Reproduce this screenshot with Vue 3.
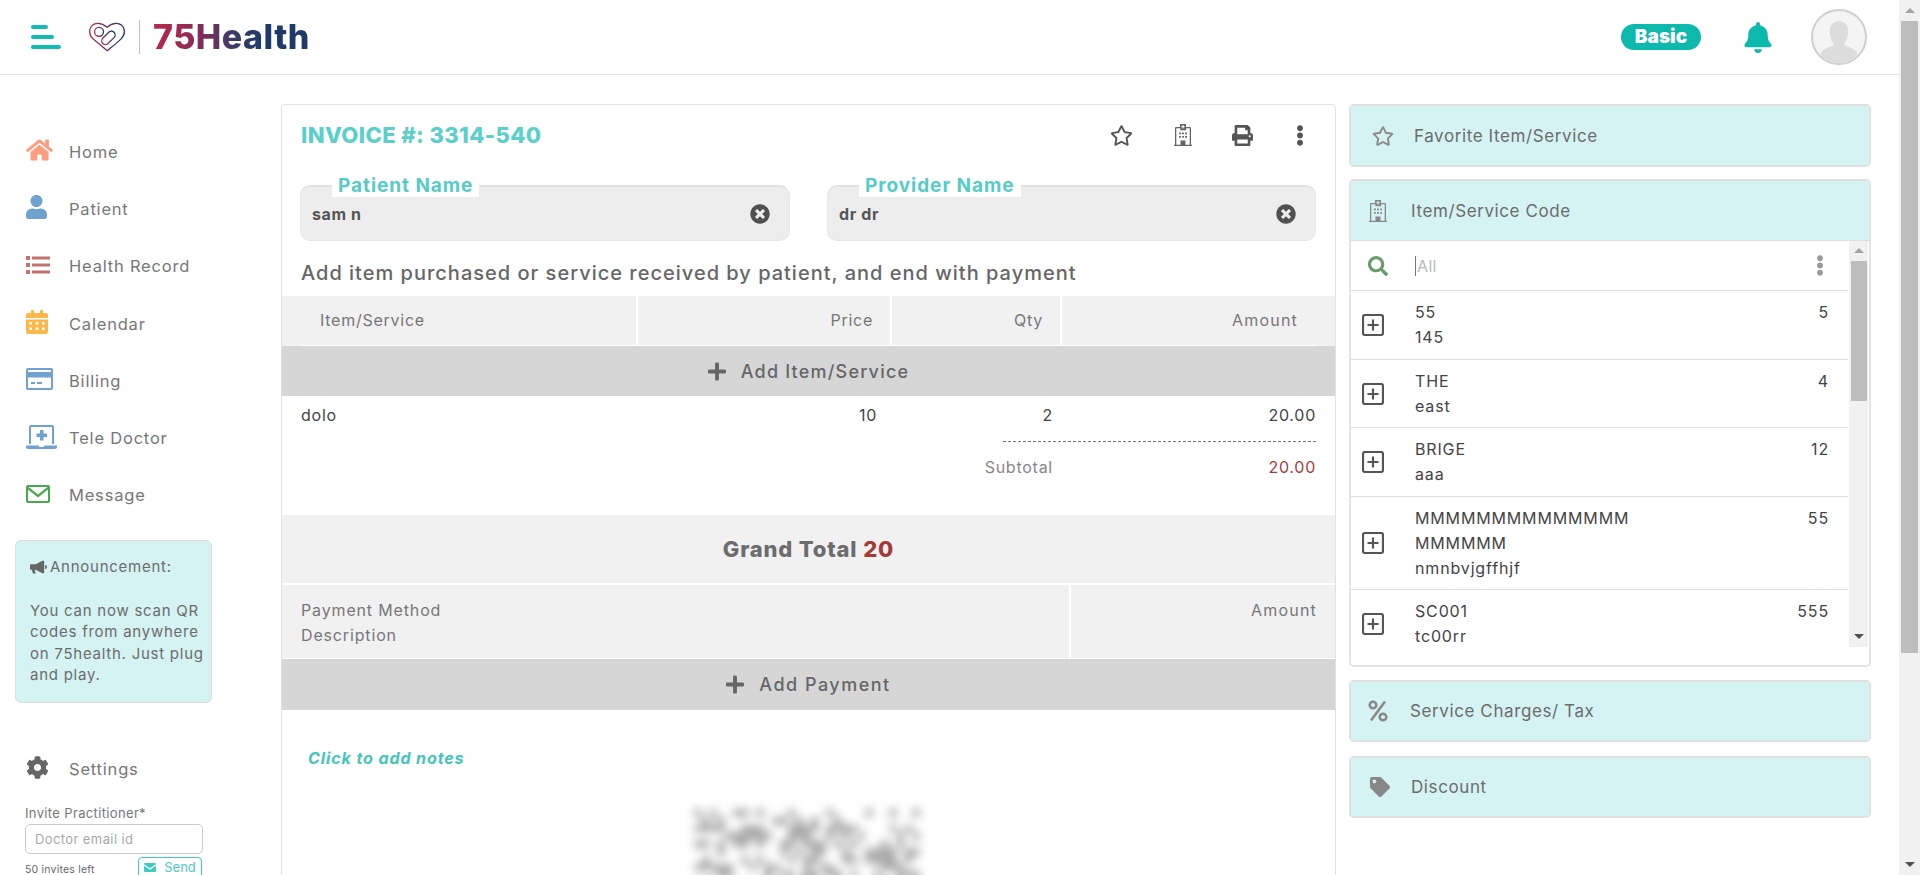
<template>
  <div class="screen">
    <div class="page">
      <header class="topbar">
        <div class="burger"><i class="b1"></i><i class="b2"></i><i class="b3"></i></div>
        <svg class="heart" viewBox="0 0 40 32" fill="none">
          <defs>
            <linearGradient id="logoGrad" x1="0" y1="0" x2="1" y2="0">
              <stop offset="0" stop-color="#b5304d" />
              <stop offset="1" stop-color="#1f3a68" />
            </linearGradient>
          </defs>
          <g stroke="url(#logoGrad)" stroke-width="1.4">
            <path d="M20 30.500 L5 18 C-1 12 1 2 10 1.500 C14 1.400 17 3 20 5.500 C23 3 26 1.400 30 1.500 C39 2 41 12 35 18 C31 22 26 26 23.500 28 C22 29.500 21 30.500 20 30.500 Z" />
            <circle cx="11.500" cy="10.500" r="4.800" />
            <rect x="13" y="13" width="17" height="8" rx="4" transform="rotate(-45 21.500 17)" />
          </g>
        </svg>
        <span class="logo-div"></span>
        <span class="logo-text">75Health</span>
        <div class="top-right">
          <span class="plan">Basic</span>
          <svg class="bell" :viewBox="icons.bell.vb"><path :d="icons.bell.d" /></svg>
          <div class="avatar">
            <svg viewBox="0 0 56 56"><path d="M28 11c7 0 10 5 10 11 0 5-2 10-4 12v3c3 2 12 3 14 10a26 26 0 0 1-40 0c2-7 11-8 14-10v-3c-2-2-4-7-4-12 0-6 3-11 10-11z" /></svg>
          </div>
        </div>
      </header>

      <div class="content">
        <aside class="sidebar">
          <nav>
            <a v-for="n in nav" :key="n.label" class="nav-item">
              <span class="nav-ico">
                <svg :viewBox="icons[n.icon].vb" :class="n.icon" :style="{ color: n.color }"><path fill-rule="evenodd" :d="icons[n.icon].d" /></svg>
              </span>
              <span>{{ n.label }}</span>
            </a>
          </nav>
          <div class="announce">
            <div class="ann-title">
              <svg viewBox="0 0 18 14"><path d="M1 4h5l7-3.500h2v13h-2L6 10H5l1 4H3L2 10H1a1 1 0 0 1-1-1V5a1 1 0 0 1 1-1zM16 5a2 2 0 0 1 0 4z" /></svg>
              Announcement:
            </div>
            <p>You can now scan QR codes from anywhere on 75health. Just plug and play.</p>
          </div>
          <a class="nav-item settings">
            <span class="nav-ico"><svg :viewBox="icons.cog.vb" class="cog"><path :d="icons.cog.d" /></svg></span>
            <span>Settings</span>
          </a>
          <div class="invite">
            <label>Invite Practitioner*</label>
            <div class="invite-input">Doctor email id</div>
            <div class="invite-foot">
              <small>50 invites left</small>
              <button class="send">
                <svg viewBox="0 0 16 12"><path d="M0 1.500A1.500 1.500 0 0 1 1.500 0h13A1.500 1.500 0 0 1 16 1.500L8 7zM0 3.500l8 5.500 8-5.500v7a1.500 1.500 0 0 1-1.500 1.500h-13A1.500 1.500 0 0 1 0 10.500z" /></svg>
                Send
              </button>
            </div>
          </div>
        </aside>

        <main class="invoice">
          <div class="inv-top">
            <h1>INVOICE #: 3314-540</h1>
            <div class="inv-tools">
              <svg :viewBox="icons.star.vb" class="t-star"><path :d="icons.star.d" /></svg>
              <svg :viewBox="icons.hospital.vb" class="t-hosp"><path fill-rule="evenodd" :d="icons.hospital.d" /></svg>
              <svg :viewBox="icons.print.vb" class="t-print"><path :d="icons.print.d" /></svg>
              <svg :viewBox="icons.dots.vb" class="t-dots"><path :d="icons.dots.d" /></svg>
            </div>
          </div>

          <div class="fields">
            <div v-for="f in fields" :key="f.label" class="field">
              <span class="field-label">{{ f.label }}</span>
              <span class="field-val">{{ f.value }}</span>
              <svg :viewBox="icons.times.vb"><path :d="icons.times.d" /></svg>
            </div>
          </div>

          <h2 class="lead">Add item purchased or service received by patient, and end with payment</h2>

          <div class="thead">
            <div class="c-item">Item/Service</div>
            <div class="c-r">Price</div>
            <div class="c-r">Qty</div>
            <div class="c-r c-last">Amount</div>
          </div>
          <div class="add-row">
            <svg :viewBox="icons.plus.vb"><path :d="icons.plus.d" /></svg>
            <span>Add Item/Service</span>
          </div>

          <div class="lines">
            <div class="line">
              <span>dolo</span><span class="r">10</span><span class="r">2</span><span class="r">20.00</span>
            </div>
            <div class="dotted"></div>
            <div class="line sub">
              <span></span><span></span><span class="r muted">Subtotal</span><span class="r red">20.00</span>
            </div>
          </div>

          <div class="grand">Grand Total <b>20</b></div>

          <div class="pay-head">
            <div class="pay-left">Payment Method<br />Description</div>
            <div class="pay-right">Amount</div>
          </div>
          <div class="add-row add-pay">
            <svg :viewBox="icons.plus.vb"><path :d="icons.plus.d" /></svg>
            <span>Add Payment</span>
          </div>

          <div class="notes">Click to add notes</div>
          <div class="qr">
            <svg viewBox="0 0 29 29" shape-rendering="crispEdges">
              <rect v-for="c in qrCells" :key="c.k" :x="c.x" :y="c.y" width="1" height="1" />
            </svg>
          </div>
        </main>

        <section class="side">
          <div class="box fav">
            <div class="box-head">
              <svg :viewBox="icons.star.vb" class="h-star"><path :d="icons.star.d" /></svg>
              <span>Favorite Item/Service</span>
            </div>
          </div>

          <div class="box code-box">
            <div class="box-head">
              <svg :viewBox="icons.hospital.vb" class="h-hosp"><path fill-rule="evenodd" :d="icons.hospital.d" /></svg>
              <span>Item/Service Code</span>
            </div>
            <div class="list-wrap">
              <div class="list">
                <div class="search">
                  <svg :viewBox="icons.search.vb" class="s-ico"><path :d="icons.search.d" /></svg>
                  <span class="caret"></span><span class="ph">All</span>
                  <svg :viewBox="icons.dots.vb" class="s-dots"><path :d="icons.dots.d" /></svg>
                </div>
                <div v-for="it in items" :key="it.sub" class="item">
                  <svg class="plus-box" viewBox="0 0 22 22" fill="none">
                    <rect x="1" y="1" width="20" height="20" rx="2" />
                    <path d="M11 5.500v11M5.500 11h11" />
                  </svg>
                  <div class="item-text">{{ it.title }}<br />{{ it.sub }}</div>
                  <div class="item-num">{{ it.num }}</div>
                </div>
              </div>
              <div class="mini-scroll">
                <i class="up"></i>
                <div class="mini-thumb"></div>
                <i class="down"></i>
              </div>
            </div>
          </div>

          <div class="box">
            <div class="box-head">
              <svg viewBox="0 0 20 24" class="h-pct" fill="none">
                <circle cx="5" cy="6" r="3.300" /><circle cx="15" cy="18" r="3.300" /><path d="M17 2.500 3 21.500" />
              </svg>
              <span>Service Charges/ Tax</span>
            </div>
          </div>
          <div class="box last">
            <div class="box-head">
              <svg :viewBox="icons.tag.vb" class="h-tag"><path :d="icons.tag.d" /></svg>
              <span>Discount</span>
            </div>
          </div>
        </section>
      </div>
    </div>

    <div class="scrollbar">
      <i class="up"></i>
      <div class="thumb"></div>
      <i class="down"></i>
    </div>
  </div>
</template>

<script setup>
const icons = {
  home: { vb: '0 0 576 512', d: 'M280.37 148.26L96 300.11V464a16 16 0 0 0 16 16l112.06-.29a16 16 0 0 0 15.92-16V368a16 16 0 0 1 16-16h64a16 16 0 0 1 16 16v95.64a16 16 0 0 0 16 16.05L464 480a16 16 0 0 0 16-16V300L295.67 148.26a12.19 12.19 0 0 0-15.3 0zM571.6 251.47L488 182.56V44.05a12 12 0 0 0-12-12h-56a12 12 0 0 0-12 12v72.61L318.47 43a48 48 0 0 0-61 0L4.34 251.47a12 12 0 0 0-1.6 16.9l25.5 31A12 12 0 0 0 45.15 301l235.22-193.74a12.19 12.19 0 0 1 15.3 0L530.9 301a12 12 0 0 0 16.9-1.6l25.5-31a12 12 0 0 0-1.7-16.93z' },
  user: { vb: '0 0 448 512', d: 'M224 256c70.7 0 128-57.3 128-128S294.7 0 224 0 96 57.3 96 128s57.3 128 128 128zm89.6 32h-16.7c-22.2 10.2-46.9 16-72.9 16s-50.6-5.8-72.9-16h-16.7C60.2 288 0 348.2 0 422.4V464c0 26.5 21.5 48 48 48h352c26.5 0 48-21.5 48-48v-41.6c0-74.2-60.2-134.4-134.4-134.4z' },
  list: { vb: '0 0 24 20', d: 'M0 1h4v4H0zM6 1.500h18v3H6zM0 8h4v4H0zM6 8.500h18v3H6zM0 15h4v4H0zM6 15.500h18v3H6z' },
  calendar: { vb: '0 0 22 24', d: 'M2 3h3V1a1 1 0 0 1 1-1h1a1 1 0 0 1 1 1v2h6V1a1 1 0 0 1 1-1h1a1 1 0 0 1 1 1v2h3a2 2 0 0 1 2 2v3H0V5a2 2 0 0 1 2-2zM0 9.500h22V22a2 2 0 0 1-2 2H2a2 2 0 0 1-2-2zM3.500 12v2.500H6V12zM9.700 12v2.500h2.600V12zM16 12v2.500h2.500V12zM3.500 17.500V20H6v-2.500zM9.700 17.500V20h2.600v-2.500zM16 17.500V20h2.500v-2.500z' },
  card: { vb: '0 0 27 22', d: 'M2 0h23a2 2 0 0 1 2 2v18a2 2 0 0 1-2 2H2a2 2 0 0 1-2-2V2a2 2 0 0 1 2-2zM2 2v2h23V2zM2 9.500V20h23V9.500zM5 14h4v2H5zM11 14h5v2h-5z' },
  laptop: { vb: '0 0 31 24', d: 'M5 0h21a2 2 0 0 1 2 2v17h-2V2H5v17H3V2a2 2 0 0 1 2-2zM0 20.500h12.500l1 1.500h4l1-1.500H31v1a2.500 2.500 0 0 1-2.500 2.500h-26A2.500 2.500 0 0 1 0 21.500zM14 5h3.500v3.500H21V12h-3.500v3.500H14V12h-3.500V8.500H14z' },
  mail: { vb: '0 0 24 18', d: 'M2 0h20a2 2 0 0 1 2 2v14a2 2 0 0 1-2 2H2a2 2 0 0 1-2-2V2a2 2 0 0 1 2-2zM2.500 2 12 9.500 21.500 2zM2 4.500V16h20V4.500l-10 8z' },
  cog: { vb: '0 0 512 512', d: 'M487.4 315.7l-42.6-24.6c4.3-23.2 4.3-47 0-70.2l42.6-24.6c4.9-2.8 7.1-8.6 5.5-14-11.1-35.6-30-67.8-54.7-94.6-3.8-4.1-10-5.1-14.8-2.3L380.8 110c-17.9-15.4-38.5-27.3-60.8-35.1V25.8c0-5.6-3.9-10.5-9.4-11.7-36.7-8.2-74.3-7.8-109.2 0-5.5 1.2-9.4 6.1-9.4 11.7V75c-22.2 7.9-42.8 19.8-60.8 35.1L88.7 85.5c-4.9-2.8-11-1.9-14.8 2.3-24.7 26.7-43.6 58.9-54.7 94.6-1.7 5.4.6 11.2 5.5 14L67.3 221c-4.3 23.2-4.3 47 0 70.2l-42.6 24.6c-4.9 2.8-7.1 8.6-5.5 14 11.1 35.6 30 67.8 54.7 94.6 3.8 4.1 10 5.1 14.8 2.3l42.6-24.6c17.9 15.4 38.5 27.3 60.8 35.1v49.2c0 5.6 3.9 10.5 9.4 11.7 36.7 8.2 74.3 7.8 109.2 0 5.5-1.2 9.4-6.1 9.4-11.7v-49.2c22.2-7.9 42.8-19.8 60.8-35.1l42.6 24.6c4.9 2.8 11 1.9 14.8-2.3 24.7-26.7 43.6-58.9 54.7-94.6 1.5-5.5-.7-11.3-5.6-14.1zM256 336c-44.1 0-80-35.9-80-80s35.9-80 80-80 80 35.9 80 80-35.9 80-80 80z' },
  times: { vb: '0 0 512 512', d: 'M256 8C119 8 8 119 8 256s111 248 248 248 248-111 248-248S393 8 256 8zm121.6 313.1c4.7 4.7 4.7 12.3 0 17L338 377.6c-4.7 4.7-12.3 4.7-17 0L256 312l-65.1 65.6c-4.7 4.7-12.3 4.7-17 0L134.4 338c-4.7-4.7-4.7-12.3 0-17l65.6-65-65.6-65.1c-4.7-4.7-4.7-12.3 0-17l39.6-39.6c4.7-4.7 12.3-4.7 17 0l65 65.7 65.1-65.6c4.7-4.7 12.3-4.7 17 0l39.6 39.6c4.7 4.7 4.7 12.3 0 17L312 256l65.6 65.1z' },
  star: { vb: '0 0 576 512', d: 'M528.1 171.5L382 150.2 316.7 17.8c-11.7-23.6-45.6-23.9-57.4 0L194 150.2 47.9 171.5c-26.2 3.8-36.7 36.1-17.7 54.6l105.7 103-25 145.5c-4.5 26.3 23.2 46 46.4 33.7L288 439.6l130.7 68.7c23.2 12.2 50.9-7.4 46.4-33.7l-25-145.5 105.7-103c19-18.5 8.5-50.8-17.7-54.6zM388.6 312.3l23.7 138.4L288 385.4l-124.3 65.3 23.7-138.4-100.6-98 139-20.2 62.2-126 62.2 126 139 20.2-100.6 98z' },
  hospital: { vb: '0 0 18 22', d: 'M6 0h6v3h4a1 1 0 0 1 1 1v16.700h1V22H0v-1.300h1V4a1 1 0 0 1 1-1h4zM2.300 4.300v16.400h4.200v-4.200h5v4.200h4.200V4.300h-3.500v2H6.300v-2zM8.500 1v1.200H7.300v1h1.200v1.300h1V3.200h1.200v-1H9.500V1zM5 8.500v1.800h1.800V8.500zM8.100 8.500v1.800h1.800V8.500zM11.200 8.500v1.800H13V8.500zM5 12v1.800h1.800V12zM8.100 12v1.800h1.800V12zM11.200 12v1.800H13V12z' },
  print: { vb: '0 0 512 512', d: 'M448 192V77.25c0-8.49-3.37-16.62-9.37-22.63L393.37 9.37c-6-6-14.14-9.37-22.63-9.37H96C78.33 0 64 14.33 64 32v160c-35.35 0-64 28.65-64 64v112c0 8.84 7.16 16 16 16h48v96c0 17.67 14.33 32 32 32h320c17.67 0 32-14.33 32-32v-96h48c8.84 0 16-7.16 16-16V256c0-35.35-28.65-64-64-64zm-64 256H128v-96h256v96zm0-224H128V64h192v48c0 8.84 7.16 16 16 16h48v96zm48 72c-13.25 0-24-10.75-24-24 0-13.26 10.75-24 24-24s24 10.74 24 24c0 13.25-10.75 24-24 24z' },
  dots: { vb: '0 0 192 512', d: 'M96 184c39.8 0 72 32.2 72 72s-32.2 72-72 72-72-32.2-72-72 32.2-72 72-72zM24 80c0 39.8 32.2 72 72 72s72-32.2 72-72S135.8 8 96 8 24 40.2 24 80zm0 352c0 39.8 32.2 72 72 72s72-32.2 72-72-32.2-72-72-72-72 32.2-72 72z' },
  plus: { vb: '0 0 448 512', d: 'M416 208H272V64c0-17.67-14.33-32-32-32h-32c-17.67 0-32 14.33-32 32v144H32c-17.67 0-32 14.33-32 32v32c0 17.67 14.33 32 32 32h144v144c0 17.67 14.33 32 32 32h32c17.67 0 32-14.33 32-32V304h144c17.67 0 32-14.33 32-32v-32c0-17.67-14.33-32-32-32z' },
  search: { vb: '0 0 512 512', d: 'M505 442.7L405.3 343c-4.5-4.5-10.6-7-17-7H372c27.6-35.3 44-79.7 44-128C416 93.1 322.9 0 208 0S0 93.1 0 208s93.1 208 208 208c48.3 0 92.7-16.4 128-44v16.3c0 6.4 2.5 12.5 7 17l99.7 99.7c9.4 9.4 24.6 9.4 33.9 0l28.3-28.3c9.4-9.4 9.4-24.6.1-34zM208 336c-70.7 0-128-57.2-128-128 0-70.7 57.2-128 128-128 70.7 0 128 57.2 128 128 0 70.7-57.2 128-128 128z' },
  bell: { vb: '0 0 448 512', d: 'M224 512c35.32 0 63.97-28.65 63.97-64H160.03c0 35.35 28.65 64 63.97 64zm215.39-149.71c-19.32-20.76-55.47-51.99-55.47-154.29 0-77.7-54.48-139.9-127.94-155.16V32c0-17.67-14.32-32-31.98-32s-31.98 14.33-31.98 32v20.84C118.56 68.1 64.08 130.3 64.08 208c0 102.3-36.15 133.53-55.47 154.29-6 6.45-8.66 14.16-8.61 21.71.11 16.4 12.98 32 32.1 32h383.8c19.12 0 32-15.6 32.1-32 .05-7.55-2.61-15.27-8.61-21.71z' },
  tag: { vb: '0 0 512 512', d: 'M0 252.118V48C0 21.49 21.49 0 48 0h204.118a48 48 0 0 1 33.941 14.059l211.882 211.882c18.745 18.745 18.745 49.137 0 67.882L293.823 497.941c-18.745 18.745-49.137 18.745-67.882 0L14.059 286.059A48 48 0 0 1 0 252.118zM112 64c-26.51 0-48 21.49-48 48s21.49 48 48 48 48-21.49 48-48-21.49-48-48-48z' }
}

const nav = [
  { label: 'Home', icon: 'home', color: '#ff9d80' },
  { label: 'Patient', icon: 'user', color: '#6fa2cf' },
  { label: 'Health Record', icon: 'list', color: '#c5726f' },
  { label: 'Calendar', icon: 'calendar', color: '#fdb849' },
  { label: 'Billing', icon: 'card', color: '#6fa2cf' },
  { label: 'Tele Doctor', icon: 'laptop', color: '#6fa2cf' },
  { label: 'Message', icon: 'mail', color: '#4aa84f' }
]

const fields = [
  { label: 'Patient Name', value: 'sam n' },
  { label: 'Provider Name', value: 'dr dr' }
]

const items = [
  { title: '55', sub: '145', num: '5' },
  { title: 'THE', sub: 'east', num: '4' },
  { title: 'BRIGE', sub: 'aaa', num: '12' },
  { title: 'MMMMMMMMMMMMMM\nMMMMMM', sub: 'nmnbvjgffhjf', num: '55' },
  { title: 'SC001', sub: 'tc00rr', num: '555' }
]

// blurred qr code in the reference, only the texture matters
const qrCells = []
let seed = 75
for (let y = 0; y < 29; y++) {
  for (let x = 0; x < 29; x++) {
    seed = (seed * 137 + 41) % 1024
    if (seed % 5 < 2) qrCells.push({ k: x + '-' + y, x, y })
  }
}
</script>

<style>
html, body { margin: 0; overflow: hidden; background: #fff; }
</style>

<style scoped>
.screen {
  display: flex;
  width: 1920px;
  height: 875px;
  overflow: hidden;
  background: #fff;
  color: #666;
  font-family: Inter, "Noto Sans", sans-serif;
  font-size: 16px;
}
.page { width: 1899px; flex: none; }

.scrollbar {
  width: 21px;
  background: #f1f1f1;
  display: flex;
  flex-direction: column;
  align-items: center;
}
.scrollbar .thumb { width: 17px; height: 632px; background: #bdbdbd; }
.scrollbar .up { margin: 8px 0 8px; }
.scrollbar .down { margin-top: auto; margin-bottom: 8px; }
.up, .down { display: block; width: 0; height: 0; border-left: 5px solid transparent; border-right: 5px solid transparent; }
.up { border-bottom: 5px solid #a3a3a3; }
.down { border-top: 5px solid #505050; }

.topbar {
  height: 74px;
  border-bottom: 1px solid #e6e6e6;
  display: flex;
  align-items: center;
  padding: 0 32px 0 31px;
}
.burger { width: 30px; margin-right: 27px; display: flex; flex-direction: column; gap: 6px; }
.burger i { display: block; height: 4px; border-radius: 2px; background: #12bcb2; }
.b1 { width: 17px; }
.b2 { width: 23px; }
.b3 { width: 30px; }
.heart { width: 38px; height: 30px; margin-top: -1px; }
.logo-div { width: 1px; height: 34px; background: #d3b8bf; margin: 0 13px; }
.logo-text {
  font-size: 34px;
  font-weight: 800;
  letter-spacing: 0.5px;
  line-height: 40px;
  background: linear-gradient(90deg, #b32c4b 0, #8a2c55 28%, #3f3a66 50%, #1f3a68 70%);
  -webkit-background-clip: text;
  background-clip: text;
  color: transparent;
}
.top-right { margin-left: auto; display: flex; align-items: center; }
.plan {
  width: 80px;
  height: 26px;
  line-height: 26px;
  border-radius: 13px;
  background: #0db8ad;
  color: #fff;
  text-align: center;
  font-size: 19px;
  font-weight: 900;
}
.bell { width: 28px; height: 31px; margin: 0 39px 0 43px; fill: #0db8ad; }
.avatar { width: 52px; height: 52px; border: 2px solid #cfcfcf; border-radius: 50%; overflow: hidden; background: #f4f4f4; }
.avatar svg { display: block; width: 100%; height: 100%; fill: #dcdcdc; }

.content { display: flex; align-items: flex-start; }

.sidebar { width: 281px; flex: none; padding-top: 48px; }
.nav-item {
  display: flex;
  align-items: center;
  height: 57.3px;
  padding-left: 26px;
  color: #777;
  font-size: 16.5px;
  letter-spacing: 0.8px;
}
.nav-ico { width: 43px; flex: none; display: flex; align-items: center; }
.nav-ico svg { fill: currentColor; height: 24px; display: block; margin-top: -3px; }
.nav-ico svg.list { width: 24px; height: 20px; }
.nav-ico svg.mail { width: 24px; height: 18px; }
.nav-ico svg.laptop { width: 31px; height: 24px; }
.nav-ico svg.card { width: 27px; height: 22px; }
.nav-ico svg.calendar { width: 22px; }
.nav-ico svg.home { width: 27px; }
.nav-ico svg.user { width: 21px; }
.announce {
  box-sizing: border-box;
  width: 197px;
  height: 163px;
  margin: 16px 0 0 15px;
  padding: 15px 0 15px 14px;
  background: #d4f3f2;
  border: 1px solid #dcdcdc;
  border-radius: 6px;
  font-size: 15px;
  line-height: 21.6px;
  color: #6c6c6c;
  letter-spacing: 0.75px;
}
.ann-title { display: flex; align-items: center; gap: 3px; }
.ann-title svg { width: 17px; height: 14px; fill: #666; }
.announce p { margin: 22px 0 0; }
.settings { height: 40px; margin-top: 46px; }
.cog { width: 23px; height: 23px !important; fill: #666 !important; }
.invite { margin: 16px 0 0 25px; width: 178px; }
.invite label { display: block; font-size: 13px; line-height: 16px; color: #777; letter-spacing: 0.35px; }
.invite-input {
  box-sizing: border-box;
  height: 30px;
  margin-top: 3px;
  padding-left: 9px;
  border: 1px solid #ccc;
  border-radius: 5px;
  font-size: 13px;
  line-height: 28px;
  color: #a8a8a8;
  letter-spacing: 0.4px;
}
.invite-foot { display: flex; justify-content: space-between; align-items: flex-start; margin-top: 3px; }
.invite-foot small { font-size: 10.5px; margin-top: 6px; color: #666; letter-spacing: 0.2px; }
.send {
  box-sizing: border-box;
  width: 64px;
  height: 26px;
  padding: 0 0 6px;
  margin-right: 1px;
  display: flex;
  align-items: center;
  justify-content: center;
  gap: 8px;
  background: #fff;
  border: 1px solid #3fc9c0;
  border-radius: 4px;
  color: #4cccc4;
  font: 13px Inter, sans-serif;
}
.send svg { width: 12px; height: 9px; fill: #3fc9c0; }

.invoice {
  box-sizing: border-box;
  width: 1055px;
  height: 860px;
  flex: none;
  margin-top: 29px;
  border: 1px solid #e2e2e2;
  border-radius: 4px;
}
.inv-top { height: 60px; display: flex; align-items: center; padding-left: 19px; }
.inv-top h1 { margin: 0; font-size: 22px; font-weight: 800; color: #5bcfc8; letter-spacing: 0.4px; }
.inv-tools { margin-left: auto; display: flex; align-items: center; fill: #555; }
.inv-tools svg { display: block; }
.t-star { width: 23px; height: 21px; margin-right: 41px; }
.t-hosp { width: 18px; height: 22px; margin-right: 40px; fill: #666; }
.t-print { width: 21px; height: 21px; margin-right: 43px; }
.t-dots { width: 8px; height: 21px; margin-right: 31px; fill: #555; }

.fields { display: flex; gap: 37px; margin: 20px 18px 0; }
.field {
  position: relative;
  box-sizing: border-box;
  width: 490px;
  height: 56px;
  display: flex;
  align-items: center;
  padding: 1px 11px 0;
  background: #ededed;
  border: 1px solid #e6e6e6;
  border-top: 2px solid #e2e2e2;
  border-radius: 10px;
  color: #555;
}
.field:last-child { width: 489px; }
.field-label {
  position: absolute;
  top: -11px;
  left: 31px;
  padding: 0 6px;
  height: 21px;
  line-height: 20px;
  background: #fff;
  color: #55ccc5;
  font-size: 19px;
  font-weight: 700;
  letter-spacing: 0.95px;
}
.field-val { font-weight: 700; font-size: 16px; letter-spacing: 0.6px; }
.field svg { width: 20px; height: 20px; margin: -1px 8px 0 auto; fill: #505050; }

.lead {
  margin: 0;
  height: 55px;
  padding: 9px 0 0 19px;
  box-sizing: border-box;
  display: flex;
  align-items: center;
  font-size: 20px;
  font-weight: 500;
  letter-spacing: 1px;
  color: #666;
}
.thead {
  display: grid;
  grid-template-columns: 338px 254px 170px 1fr;
  padding: 0 18px;
  background: #f1f1f1;
  color: #777;
  letter-spacing: 0.75px;
}
.thead > div {
  height: 49px;
  line-height: 49px;
  border-bottom: 1px solid #fff;
  border-right: 2px solid #fff;
}
.thead > .c-last { border-right: 0; padding-right: 19px; letter-spacing: 1.2px; }
.c-item { padding-left: 20px; }
.c-r { text-align: right; padding-right: 17px; }
.add-row {
  height: 50px;
  background: #d6d6d6;
  display: flex;
  align-items: center;
  justify-content: center;
  gap: 15px;
  color: #666;
  font-size: 18px;
  font-weight: 500;
  letter-spacing: 1.2px;
}
.add-row svg { width: 18px; height: 21px; fill: #666; }
.add-pay { height: 51px; letter-spacing: 1.5px; }

.lines { height: 119px; padding: 0 19px 0 18px; box-sizing: border-box; color: #444; letter-spacing: 0.75px; }
.line { display: grid; grid-template-columns: 288px 289px 176px 1fr; height: 38px; align-items: center; }
.line span:first-child { padding-left: 1px; }
.line.sub { height: 24px; margin-top: 13px; }
.r { text-align: right; }
.muted { color: #888; white-space: nowrap; }
.red { color: #a5403c; }
.dotted {
  height: 1px;
  margin: 7px 0 0 703px;
  background: repeating-linear-gradient(90deg, #777 0 3px, transparent 3px 5px);
}
.grand {
  height: 68px;
  margin-bottom: 2px;
  background: #f1f1f1;
  display: flex;
  align-items: center;
  justify-content: center;
  gap: 6px;
  font-size: 22px;
  font-weight: 800;
  color: #6c6c6c;
  letter-spacing: 0.8px;
}
.grand b { color: #a33a36; font-weight: 800; }
.pay-head {
  display: grid;
  grid-template-columns: 789px 1fr;
  height: 73px;
  margin-bottom: 1px;
  background: #f1f1f1;
  color: #777;
  line-height: 25px;
  letter-spacing: 0.85px;
}
.pay-left { padding: 13px 0 0 19px; border-right: 2px solid #fff; box-sizing: border-box; }
.pay-right { padding: 13px 18px 0 0; text-align: right; letter-spacing: 1.2px; }
.notes {
  margin: 38px 0 0 26px;
  height: 20px;
  line-height: 20px;
  color: #46c4bc;
  font-size: 16px;
  font-style: italic;
  font-weight: 700;
  letter-spacing: 0.9px;
}
.qr { width: 226px; height: 230px; margin: 39px 0 0 412px; filter: blur(5px); }
.qr svg { display: block; width: 100%; height: 100%; fill: #ababab; }

.side { width: 522px; flex: none; margin: 29px 0 0 13px; display: flex; flex-direction: column; gap: 13px; }
.box {
  box-sizing: border-box;
  border: 2px solid #e0e0e0;
  border-radius: 5px;
}
.box-head {
  height: 58px;
  background: #d4f3f2;
  display: flex;
  align-items: center;
  color: #6c6c6c;
  font-size: 17px;
  letter-spacing: 0.6px;
}
.fav { margin-bottom: -1px; }
.fav .box-head { height: 59px; }
.last { margin-top: 1px; }
.box-head svg { flex: none; fill: #888; display: block; }
.h-star { width: 22px; height: 20px; margin: 0 20px 0 21px; }
.h-hosp { width: 18px; height: 22px; margin: 0 24px 0 18px; }
.h-pct { width: 20px; height: 24px; margin: 0 22px 0 17px; stroke: #888; stroke-width: 2.5; fill: none !important; }
.h-tag { width: 20px; height: 20px; margin: 0 21px 0 19px; }

.code-box { height: 488px; border-color: #e4e4e4; border-top-color: #e0e0e0; }
.code-box .box-head { height: 59px; border-bottom: 1px solid #ddd; }
.list-wrap { display: flex; height: 406px; overflow: hidden; }
.list { width: 497px; flex: none; }
.search {
  height: 49px;
  border-bottom: 1px solid #ddd;
  display: flex;
  align-items: center;
}
.s-ico { width: 20px; height: 20px; margin-left: 17px; fill: #6a9a6d; }
.caret { width: 1px; height: 20px; background: #777; margin-left: 27px; }
.ph { color: #bbb; margin-left: 1px; letter-spacing: 0.35px; }
.s-dots { width: 8px; height: 21px; margin: 0 24px 0 auto; fill: #999; }
.item {
  display: grid;
  grid-template-columns: 64px 1fr auto;
  align-items: center;
  padding: 9px 19px 8.5px 0;
  border-bottom: 1px solid #ddd;
  line-height: 25px;
  color: #444;
  letter-spacing: 0.85px;
}
.plus-box { width: 22px; height: 22px; margin-left: 11px; stroke: #555; stroke-width: 2.2; }
.item-text { white-space: pre-line; }
.item-num { align-self: start; text-align: right; }
.mini-scroll {
  width: 19px;
  margin-left: 1px;
  height: 406px;
  background: #f1f1f1;
  display: flex;
  flex-direction: column;
  align-items: center;
}
.mini-scroll .up { margin: 7px 0 8px; }
.mini-scroll .down { margin-top: auto; margin-bottom: 8px; }
.mini-thumb { width: 16px; height: 140px; background: #bdbdbd; }
</style>
